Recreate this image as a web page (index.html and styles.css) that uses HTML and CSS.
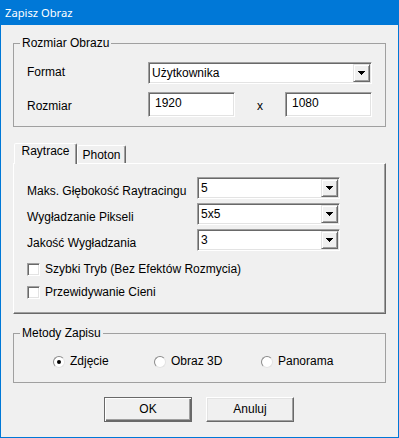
FILE: index.html
```html
<!DOCTYPE html>
<html lang="pl">
<head>
<meta charset="utf-8">
<title>Zapisz Obraz</title>
<link rel="stylesheet" href="styles.css">
</head>
<body>
<div class="window">
  <div class="titlebar">Zapisz Obraz</div>
  <div class="content">
    <fieldset class="group group-size">
      <legend>Rozmiar Obrazu</legend>
      <div class="size-body">
        <div class="row">
          <span class="label">Format</span>
          <div class="combo combo-format">
            <span class="combo-text">Użytkownika</span>
            <span class="combo-btn"><svg width="7" height="4" viewBox="0 0 7 4"><path d="M0 0h7v1H0zM1 1h5v1H1zM2 2h3v1H2zM3 3h1v1H3z" fill="#000"/></svg></span>
          </div>
        </div>
        <div class="row row-dims">
          <span class="label label-low">Rozmiar</span>
          <div class="edit">1920</div>
          <span class="times">x</span>
          <div class="edit">1080</div>
        </div>
      </div>
    </fieldset>

    <div class="tabs">
      <div class="tab tab-active">Raytrace</div>
      <div class="tab">Photon</div>
    </div>
    <div class="tab-panel">
      <div class="prows">
        <div class="prow">
          <span class="plabel">Maks. Głębokość Raytracingu</span>
          <div class="combo combo-small">
            <span class="combo-text">5</span>
            <span class="combo-btn"><svg width="7" height="4" viewBox="0 0 7 4"><path d="M0 0h7v1H0zM1 1h5v1H1zM2 2h3v1H2zM3 3h1v1H3z" fill="#000"/></svg></span>
          </div>
        </div>
        <div class="prow">
          <span class="plabel">Wygładzanie Pikseli</span>
          <div class="combo combo-small">
            <span class="combo-text">5x5</span>
            <span class="combo-btn"><svg width="7" height="4" viewBox="0 0 7 4"><path d="M0 0h7v1H0zM1 1h5v1H1zM2 2h3v1H2zM3 3h1v1H3z" fill="#000"/></svg></span>
          </div>
        </div>
        <div class="prow">
          <span class="plabel">Jakość Wygładzania</span>
          <div class="combo combo-small">
            <span class="combo-text">3</span>
            <span class="combo-btn"><svg width="7" height="4" viewBox="0 0 7 4"><path d="M0 0h7v1H0zM1 1h5v1H1zM2 2h3v1H2zM3 3h1v1H3z" fill="#000"/></svg></span>
          </div>
        </div>
      </div>
      <div class="checks">
        <div class="check"><span class="box"></span><span>Szybki Tryb (Bez Efektów Rozmycia)</span></div>
        <div class="check"><span class="box"></span><span>Przewidywanie Cieni</span></div>
      </div>
    </div>

    <fieldset class="group group-method">
      <legend>Metody Zapisu</legend>
      <div class="radios">
        <div class="radio"><span class="rb rb-on"><span class="dot"></span></span><span>Zdjęcie</span></div>
        <div class="radio"><span class="rb"></span><span>Obraz 3D</span></div>
        <div class="radio"><span class="rb"></span><span>Panorama</span></div>
      </div>
    </fieldset>

    <div class="buttons">
      <div class="btn btn-default">OK</div>
      <div class="btn">Anuluj</div>
    </div>
  </div>
</div>
</body>
</html>
```

FILE: styles.css
```css
html, body {
  margin: 0;
  padding: 0;
}

body {
  font-family: "Liberation Sans", Arial, sans-serif;
  font-size: 12px;
  color: #000;
  background: #f0f0f0;
}

.window {
  width: 399px;
  height: 438px;
  box-sizing: border-box;
  border: 1px solid #0078d7;
  border-top: 0;
  background: #f0f0f0;
}

.titlebar {
  height: 25px;
  background: #0078d7;
  color: #fff;
  font-family: "Noto Sans", sans-serif;
  font-size: 11.2px;
  line-height: 25px;
  padding-left: 4px;
}

.content {
  padding: 0 12px;
}

/* group boxes */
.group {
  margin: 0;
  padding: 0;
  min-width: 0;
  border: 1px solid #a0a0a0;
}

.group legend {
  margin-left: 6px;
  padding: 0 2px;
  line-height: 15px;
  font-size: 12px;
}

.group-size {
  margin-top: 11px;
}

.size-body {
  padding: 11px 13px 9px;
  display: flex;
  flex-direction: column;
  gap: 8px;
}

.row {
  display: flex;
  align-items: flex-start;
  height: 22px;
}

.row-dims {
  height: 25px;
}

.label {
  flex: none;
  width: 121px;
  line-height: 15px;
  margin-top: 3px;
}

.label-low {
  margin-top: 7px;
}

.times {
  flex: none;
  width: 50px;
  text-align: center;
  line-height: 15px;
  margin-top: 7px;
}

/* sunken fields */
.combo,
.edit,
.box {
  box-sizing: border-box;
  background: #fff;
  border: 1px solid;
  border-color: #a0a0a0 #fff #fff #a0a0a0;
  box-shadow: inset 1px 1px #696969, inset -1px -1px #e3e3e3;
}

.combo {
  flex: none;
  height: 22px;
  display: flex;
  padding: 1px;
}

.combo-format {
  width: 224px;
}

.combo-small {
  width: 143px;
}

.combo-text {
  flex: 1;
  line-height: 18px;
  padding-left: 2px;
  white-space: nowrap;
}

.combo-btn {
  flex: none;
  box-sizing: border-box;
  width: 17px;
  display: flex;
  align-items: center;
  justify-content: center;
  background: #f0f0f0;
  border: 1px solid;
  border-color: #e3e3e3 #696969 #696969 #e3e3e3;
  box-shadow: inset 1px 1px #fff, inset -1px -1px #a0a0a0;
}

.combo-btn svg {
  display: block;
}

.edit {
  flex: none;
  width: 87px;
  height: 25px;
  padding: 3px 6px 0;
  line-height: 15px;
}

/* tabs */
.tabs {
  display: flex;
  align-items: flex-end;
  height: 20px;
  margin-top: 16px;
  padding-left: 1px;
}

.tab {
  box-sizing: border-box;
  width: 49px;
  height: 18px;
  padding-top: 2px;
  text-align: center;
  line-height: 15px;
  border: 1px solid;
  border-bottom: 0;
  border-color: #fff #696969 transparent #fff;
  box-shadow: inset -1px 0 #a0a0a0;
  border-radius: 2px 2px 0 0;
  background: #f0f0f0;
}

.tab-active {
  width: 63px;
  height: 21px;
  padding-top: 0;
  margin-bottom: -1px;
  position: relative;
  z-index: 1;
}

.tab-panel {
  box-sizing: border-box;
  height: 151px;
  border: 1px solid;
  border-color: #fff #696969 #696969 #fff;
  box-shadow: inset -1px -1px #a0a0a0;
  padding: 13px 13px 0;
}

.prows {
  display: flex;
  flex-direction: column;
  gap: 4px;
}

.prow {
  display: flex;
  align-items: flex-start;
  height: 22px;
}

.plabel {
  flex: none;
  width: 170px;
  line-height: 15px;
  margin-top: 7px;
  white-space: nowrap;
}

.checks {
  margin-top: 12px;
  display: flex;
  flex-direction: column;
  gap: 10px;
}

.check {
  display: flex;
  align-items: center;
  gap: 5px;
  height: 13px;
  line-height: 15px;
}

.box {
  flex: none;
  width: 13px;
  height: 13px;
}

/* radio group */
.group-method {
  margin-top: 12px;
}

.radios {
  display: grid;
  grid-template-columns: 101px 107px auto;
  padding: 13px 0 13px 39px;
}

.radio {
  display: flex;
  align-items: center;
  gap: 5px;
  height: 15px;
  line-height: 15px;
}

.rb {
  flex: none;
  box-sizing: border-box;
  width: 12px;
  height: 12px;
  border-radius: 50%;
  background: #fff;
  border: 1px solid;
  border-color: #8a8a8a #e3e3e3 #e3e3e3 #8a8a8a;
  display: flex;
  align-items: center;
  justify-content: center;
}

.dot {
  width: 4px;
  height: 4px;
  border-radius: 50%;
  background: #000;
}

/* buttons */
.buttons {
  display: flex;
  gap: 14px;
  margin-top: 14px;
  padding-left: 91px;
}

.btn {
  box-sizing: border-box;
  width: 88px;
  height: 25px;
  display: flex;
  align-items: center;
  justify-content: center;
  line-height: 15px;
  background: #f0f0f0;
  border: 1px solid;
  border-color: #fff #696969 #696969 #fff;
  box-shadow: inset -1px -1px #a0a0a0, inset 1px 1px #e3e3e3;
}

.btn-default {
  border-color: #696969;
  box-shadow: inset 1px 1px #fff, inset -1px -1px #696969, inset -2px -2px #a0a0a0;
}
```
